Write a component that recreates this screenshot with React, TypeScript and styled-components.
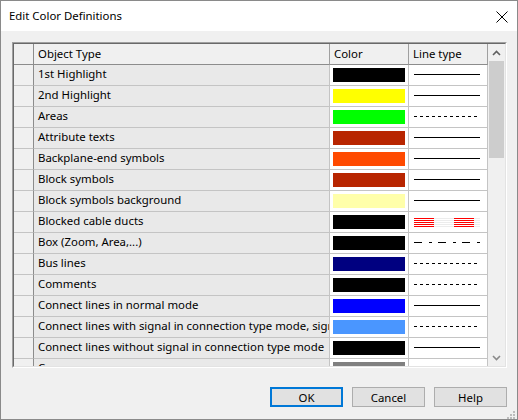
import styled, { createGlobalStyle } from 'styled-components';

type LineKind = 'solid' | 'dashed' | 'dashdot' | 'ducts' | 'none';

interface Definition {
  name: string;
  color: string;
  line: LineKind;
}

const definitions: Definition[] = [
  { name: '1st Highlight', color: '#000000', line: 'solid' },
  { name: '2nd Highlight', color: '#ffff00', line: 'solid' },
  { name: 'Areas', color: '#00ff00', line: 'dashed' },
  { name: 'Attribute texts', color: '#b82500', line: 'solid' },
  { name: 'Backplane-end symbols', color: '#ff4a00', line: 'solid' },
  { name: 'Block symbols', color: '#b82500', line: 'solid' },
  { name: 'Block symbols background', color: '#ffffaa', line: 'solid' },
  { name: 'Blocked cable ducts', color: '#000000', line: 'ducts' },
  { name: 'Box (Zoom, Area,...)', color: '#000000', line: 'dashdot' },
  { name: 'Bus lines', color: '#000080', line: 'dashed' },
  { name: 'Comments', color: '#000000', line: 'dashed' },
  { name: 'Connect lines in normal mode', color: '#0000ff', line: 'solid' },
  { name: 'Connect lines with signal in connection type mode, signal', color: '#4a96ff', line: 'dashed' },
  { name: 'Connect lines without signal in connection type mode', color: '#000000', line: 'solid' },
  { name: 'Cursor', color: '#808080', line: 'none' },
];

const GlobalStyle = createGlobalStyle`
  html, body {
    margin: 0;
    padding: 0;
    background: #ffffff;
  }
  body {
    font-family: 'Noto Sans', 'Liberation Sans', sans-serif;
    font-size: 11.4px;
    color: #000000;
  }
`;

const LineSample = ({ kind }: { kind: LineKind }) => {
  if (kind === 'none') return null;
  if (kind === 'ducts') {
    const ys = [6, 8, 10, 12, 14];
    return (
      <svg width="66" height="20" style={{ display: 'block' }}>
        {ys.map((y) => (
          <g key={y}>
            <rect x="0" y={y} width="66" height="1" fill="#ececec" />
            <rect x="0" y={y} width="20" height="1" fill="#ff0000" />
            <rect x="40" y={y} width="20" height="1" fill="#ff0000" />
          </g>
        ))}
      </svg>
    );
  }
  const dash = kind === 'dashed' ? '3 3' : kind === 'dashdot' ? '8 7 3 6' : undefined;
  const len = kind === 'dashed' ? 63 : 66;
  return (
    <svg width="66" height="20" style={{ display: 'block' }}>
      <line x1="0" y1="9.5" x2={len} y2="9.5" stroke="#000" strokeWidth="1" strokeDasharray={dash} />
    </svg>
  );
};

export default function App() {
  return (
    <>
      <GlobalStyle />
      <Window>
        <TitleBar>
          <Title>Edit Color Definitions</Title>
          <CloseButton>
            <svg width="12" height="12" viewBox="0 0 12 12">
              <path d="M0.5 0.5 L11.5 11.5 M11.5 0.5 L0.5 11.5" stroke="#000" strokeWidth="1" />
            </svg>
          </CloseButton>
        </TitleBar>
        <Body>
          <GridFrame>
            <GridInner>
              <Table>
                <HeaderRow>
                  <HeaderCell $corner />
                  <HeaderCell>Object Type</HeaderCell>
                  <HeaderCell>Color</HeaderCell>
                  <HeaderCell>Line type</HeaderCell>
                </HeaderRow>
                {definitions.map((d) => (
                  <Row key={d.name}>
                    <RowHeader />
                    <NameCell>{d.name}</NameCell>
                    <ColorCell>
                      <Swatch $color={d.color} />
                    </ColorCell>
                    <LineCell>
                      <LineSample kind={d.line} />
                    </LineCell>
                  </Row>
                ))}
              </Table>
              <Scrollbar>
                <ScrollArrow>
                  <svg width="9" height="6" viewBox="0 0 9 6">
                    <path d="M1 5 L4.5 1.5 L8 5" fill="none" stroke="#606060" strokeWidth="1.6" />
                  </svg>
                </ScrollArrow>
                <Thumb />
                <Track />
                <ScrollArrow>
                  <svg width="9" height="6" viewBox="0 0 9 6">
                    <path d="M1 1 L4.5 4.5 L8 1" fill="none" stroke="#8a8a8a" strokeWidth="1.6" />
                  </svg>
                </ScrollArrow>
              </Scrollbar>
            </GridInner>
          </GridFrame>
          <ButtonBar>
            <DialogButton $default>OK</DialogButton>
            <DialogButton>Cancel</DialogButton>
            <DialogButton>Help</DialogButton>
          </ButtonBar>
        </Body>
        <Grip>
          <svg width="10" height="10" viewBox="0 0 10 10">
            {[
              [7, 1],
              [7, 4],
              [4, 4],
              [7, 7],
              [4, 7],
              [1, 7],
            ].map(([x, y]) => (
              <rect key={`${x}-${y}`} x={x} y={y} width="2" height="2" fill="#bcbcbc" />
            ))}
          </svg>
        </Grip>
      </Window>
    </>
  );
}

const Window = styled.div`
  position: relative;
  width: 518px;
  height: 420px;
  box-sizing: border-box;
  border: 1px solid #8a8a8a;
  background: #f0f0f0;
  display: flex;
  flex-direction: column;
`;

const TitleBar = styled.div`
  height: 30px;
  background: #ffffff;
  display: flex;
  align-items: center;
  justify-content: space-between;
  padding: 0 9px 0 8px;
`;

const Title = styled.div`
  color: #000;
  margin-top: -1px;
`;

const CloseButton = styled.div`
  width: 12px;
  height: 12px;
  display: flex;
  margin-top: 1px;
`;

const Body = styled.div`
  flex: 1;
  display: flex;
  flex-direction: column;
  padding: 11px 10px 0 11px;
`;

const GridFrame = styled.div`
  width: 495px;
  height: 326px;
  box-sizing: border-box;
  border: 1px solid;
  border-color: #a0a0a0 #ffffff #ffffff #a0a0a0;
`;

const GridInner = styled.div`
  height: 100%;
  box-sizing: border-box;
  border: 1px solid;
  border-color: #696969 #e3e3e3 #e3e3e3 #696969;
  display: flex;
  background: #ffffff;
`;

const Table = styled.div`
  flex: 1;
  overflow: hidden;
  display: flex;
  flex-direction: column;
`;

const columns = '20px 296px 79px 79px';

const HeaderRow = styled.div`
  display: grid;
  grid-template-columns: ${columns};
  height: 21px;
  flex-shrink: 0;
`;

const HeaderCell = styled.div<{ $corner?: boolean }>`
  box-sizing: border-box;
  background: #f0f0f0;
  border-right: 1px solid ${(p) => (p.$corner ? '#8c8c8c' : '#a0a0a0')};
  border-bottom: 1px solid #8c8c8c;
  padding: 0 4px;
  line-height: 19px;
  white-space: nowrap;
  overflow: hidden;
`;

const Row = styled.div`
  display: grid;
  grid-template-columns: ${columns};
  height: 21px;
  flex-shrink: 0;
`;

const RowHeader = styled.div`
  box-sizing: border-box;
  background: #f0f0f0;
  border-right: 1px solid #8c8c8c;
  border-bottom: 1px solid #c4c4c4;
`;

const NameCell = styled.div`
  box-sizing: border-box;
  background: #e9e9e9;
  border-right: 1px solid #c4c4c4;
  border-bottom: 1px solid #c4c4c4;
  padding: 0 4px;
  line-height: 18px;
  white-space: nowrap;
  overflow: hidden;
`;

const ColorCell = styled.div`
  box-sizing: border-box;
  background: #ffffff;
  border-right: 1px solid #c4c4c4;
  border-bottom: 1px solid #c4c4c4;
  padding: 3px 3px 0 3px;
`;

const Swatch = styled.div<{ $color: string }>`
  width: 72px;
  height: 14px;
  background: ${(p) => p.$color};
`;

const LineCell = styled.div`
  box-sizing: border-box;
  background: #ffffff;
  border-right: 1px solid #c4c4c4;
  border-bottom: 1px solid #c4c4c4;
  padding-left: 5px;
`;

const Scrollbar = styled.div`
  width: 17px;
  flex-shrink: 0;
  background: #f0f0f0;
  display: flex;
  flex-direction: column;
`;

const ScrollArrow = styled.div`
  height: 17px;
  display: flex;
  align-items: center;
  justify-content: center;
`;

const Thumb = styled.div`
  height: 97px;
  margin: 0 1px;
  background: #cdcdcd;
`;

const Track = styled.div`
  flex: 1;
`;

const ButtonBar = styled.div`
  display: flex;
  justify-content: flex-end;
  gap: 9px;
  padding: 19px 0 0 0;
`;

const DialogButton = styled.div<{ $default?: boolean }>`
  width: 73px;
  height: 20px;
  box-sizing: border-box;
  background: #e1e1e1;
  border: ${(p) => (p.$default ? '2px solid #0078d7' : '1px solid #adadad')};
  display: flex;
  align-items: center;
  justify-content: center;
  color: #000;
`;

const Grip = styled.div`
  position: absolute;
  right: 1px;
  bottom: 1px;
  width: 10px;
  height: 10px;
`;
